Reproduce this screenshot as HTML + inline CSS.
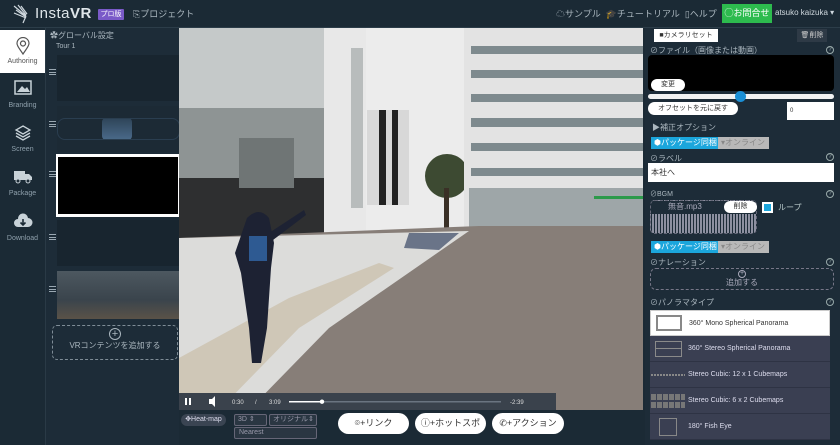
<!DOCTYPE html>
<html><head><meta charset="utf-8"><style>
*{box-sizing:border-box;margin:0;padding:0}
body{width:840px;height:445px;overflow:hidden;background:#1b2a35;font-family:"Liberation Sans","Noto Sans CJK JP",sans-serif;color:#c8d0d6;position:relative}
.a{position:absolute}
.hdr{left:0;top:0;width:840px;height:28px;background:#1b2a35;border-bottom:1px solid #2c3d49}
.nav{left:0;top:28px;width:45px;height:417px;background:#1b2a35}
.ni{position:absolute;left:0;width:45px;text-align:center;font-size:7px;color:#8fa0ac}
.tour{left:45px;top:28px;width:134px;height:417px;background:#1d2c38;border-left:1px solid #2a3a46}
.ham{position:absolute;left:3px;width:7px;height:6px;border-top:1px solid #9aa8b2;border-bottom:1px solid #9aa8b2}
.ham:after{content:"";position:absolute;left:0;top:1.5px;width:7px;border-top:1px solid #9aa8b2}
.rp{left:645px;top:28px;width:195px;height:417px;background:#1d2c38}
.lbl{position:absolute;left:650px;font-size:8px;color:#aab6be}
.q{position:absolute;right:6px;width:8px;height:8px;border:1px solid #9aa;border-radius:50%;font-size:6px;text-align:center;line-height:6px;color:#9aa}
.pill{position:absolute;background:#fff;color:#333;border-radius:9px;font-size:8px;text-align:center}
.btnb{position:absolute;font-size:8px;height:12px;line-height:12px;padding:0 3px}
.pt{position:absolute;left:650px;width:180px;height:26px;background:#3a3f52;font-size:7px;color:#dde;line-height:26px;padding-left:38px;border-bottom:1px solid #2e3344}
</style></head><body>
<div class="a hdr">
 <svg class="a" style="left:12px;top:4px" width="22" height="20" viewBox="0 0 22 20"><g stroke="#cfd8de" stroke-width="1.2" fill="none"><path d="M2 2 L14 12 M4 6 L14 13 M2 9 L14 14 M6 1 L14 11 M9 2 L15 10 M14 12 L11 19"/></g></svg>
 <div class="a" style="left:35px;top:5px;font-size:15px;color:#dfe6ea;letter-spacing:.5px">Insta<b>VR</b></div>
 <div class="a" style="left:98px;top:9px;width:26px;height:11px;background:#7a5ac8;color:#fff;font-size:7px;text-align:center;line-height:11px;border-radius:1px">プロ版</div>
 <div class="a" style="left:133px;top:7px;font-size:9px;color:#aab6be">⎘プロジェクト</div>
 <div class="a" style="left:556px;top:7px;font-size:9px;color:#aab6be">☁サンプル&nbsp; 🎓チュートリアル&nbsp; ▯ヘルプ</div>
 <div class="a" style="left:722px;top:4px;width:50px;height:19px;background:#2dbb4e;color:#fff;font-size:9px;line-height:19px;text-align:center">◯お問合せ</div>
 <div class="a" style="left:775px;top:8px;font-size:8px;color:#cfd8de">atsuko kaizuka ▾</div>
</div>
<div class="a nav">
 <div class="ni" style="top:2px;height:43px;background:#fff;color:#555"><svg width="14" height="18" viewBox="0 0 14 18" style="margin-top:7px"><path d="M7 17 C3 11 1 9 1 6.5 A6 6 0 0 1 13 6.5 C13 9 11 11 7 17Z M7 4 A2.5 2.5 0 1 0 7.01 4" fill="none" stroke="#555" stroke-width="1.2"/></svg><div style="margin-top:1px">Authoring</div></div>
 <div class="ni" style="top:52px"><svg width="18" height="15"><rect x="1" y="1" width="16" height="13" fill="none" stroke="#c8d2d8" stroke-width="1.5"/><path d="M3 12 L8 6 L11 9 L13 7 L16 12Z" fill="#c8d2d8"/></svg><div style="margin-top:5px">Branding</div></div>
 <div class="ni" style="top:96px"><svg width="18" height="18"><g fill="none" stroke="#c8d2d8" stroke-width="1.3"><path d="M9 2 L16 6 L9 10 L2 6Z M2 9 L9 13 L16 9 M2 12 L9 16 L16 12"/></g></svg><div style="margin-top:2px">Screen</div></div>
 <div class="ni" style="top:140px"><svg width="20" height="16"><rect x="1" y="3" width="11" height="9" fill="#c8d2d8"/><path d="M12 6 L16 6 L19 9 L19 12 L12 12Z" fill="#c8d2d8"/><circle cx="5" cy="13" r="2" fill="#1b2a35" stroke="#c8d2d8"/><circle cx="15" cy="13" r="2" fill="#1b2a35" stroke="#c8d2d8"/></svg><div style="margin-top:4px">Package</div></div>
 <div class="ni" style="top:185px"><svg width="20" height="16"><path d="M5 14 A4 4 0 0 1 5 6 A5 5 0 0 1 15 5 A4.5 4.5 0 0 1 15 14Z" fill="#c8d2d8"/><path d="M10 6 V12 M7.5 9.5 L10 12 L12.5 9.5" stroke="#1b2a35" stroke-width="1.6" fill="none"/></svg><div style="margin-top:4px">Download</div></div>
</div>
<div class="a tour">
 <div class="a" style="left:4px;top:2px;font-size:8px;color:#aab6be">✿グローバル設定</div>
 <div class="a" style="left:10px;top:15px;font-size:7px;color:#aab6be">Tour 1</div>
 <div class="a" style="left:11px;top:27px;width:123px;height:46px;background:#18252f"></div>
 <div class="ham" style="top:41px"></div>
 <div class="a" style="left:11px;top:78px;width:123px;height:46px;background:#1c2a35"><div class="a" style="left:45px;top:12px;width:30px;height:22px;background:linear-gradient(#2e4458,#4a6a8a);border-radius:4px"></div><div class="a" style="left:0;top:12px;width:123px;height:22px;border:1px solid #2a3e50;border-radius:8px"></div></div>
 <div class="ham" style="top:93px"></div>
 <div class="a" style="left:10px;top:126px;width:124px;height:63px;background:#fff"><div class="a" style="left:2px;top:3px;width:120px;height:57px;background:#000"></div></div>
 <div class="ham" style="top:143px"></div>
 <div class="a" style="left:11px;top:192px;width:123px;height:46px;background:#18252f"></div>
 <div class="ham" style="top:206px"></div>
 <div class="a" style="left:11px;top:243px;width:123px;height:48px;background:linear-gradient(#4d5860,#3a444c 60%,#5a5248)"></div>
 <div class="ham" style="top:258px"></div>
 <div class="a" style="left:6px;top:297px;width:126px;height:35px;border:1px dashed #7f8d97;border-radius:5px;text-align:center;font-size:8px;color:#aab6be"><div style="width:12px;height:12px;border:1px solid #aab6be;border-radius:50%;margin:2px auto 0;line-height:10px;font-size:11px">+</div>VRコンテンツを追加する</div>
</div>
<svg class="a" style="left:179px;top:28px" width="464" height="382" viewBox="0 0 464 382">
 <rect width="464" height="382" fill="#ececec"/>
 <rect x="0" y="0" width="150" height="210" fill="#c5c9c9"/>
 <rect x="0" y="80" width="145" height="75" fill="#8e9494"/>
 <rect x="0" y="150" width="145" height="62" fill="#2e2f30"/>
 <rect x="60" y="110" width="55" height="50" fill="#6f7575"/>
 <rect x="145" y="0" width="42" height="210" fill="#e8e8e8"/>
 <rect x="172" y="20" width="12" height="160" fill="#b8bcbc"/>
 <rect x="188" y="82" width="42" height="95" fill="#d8d8d8"/>
 <rect x="200" y="82" width="7" height="95" fill="#222"/><rect x="213" y="82" width="6" height="95" fill="#222"/>
 <circle cx="268" cy="148" r="22" fill="#3d4a32"/><rect x="265" y="160" width="5" height="40" fill="#3a3026"/>
 <rect x="285" y="0" width="179" height="200" fill="#e3e3e3"/>
 <g fill="#7e8a8e"><rect x="292" y="18" width="172" height="8"/><rect x="292" y="42" width="172" height="8"/><rect x="292" y="66" width="172" height="8"/><rect x="292" y="90" width="172" height="9"/><rect x="292" y="115" width="172" height="8"/><rect x="292" y="140" width="172" height="8"/></g>
 <rect x="290" y="160" width="174" height="40" fill="#9ea6a8"/>
 <rect x="415" y="168" width="49" height="3" fill="#2c9a4a"/>
 <polygon points="0,210 300,198 464,198 464,382 70,382 0,382" fill="#877e78"/>
 <polygon points="0,210 290,203 150,300 70,382 0,382" fill="#dcdcda"/>
 <polygon points="0,330 110,270 200,235 215,240 120,300 40,382 0,382" fill="#c9bea8" opacity=".7"/>
 <polygon points="230,205 280,205 260,222 225,220" fill="#6a7488"/>
 <path d="M68 190 Q80 178 90 190 L95 215 L92 240 L88 300 L82 335 L73 335 L70 300 L62 245 L56 225 Z" fill="#1d2233"/>
 <rect x="70" y="208" width="18" height="25" fill="#2e5a92"/>
 <path d="M90 205 L125 182 L127 187 L94 212Z" fill="#1d2233"/>
 <rect x="0" y="365" width="377" height="17" fill="#3a424c"/>
 <rect x="6" y="370" width="2" height="7" fill="#fff"/><rect x="10" y="370" width="2" height="7" fill="#fff"/>
 <path d="M30 371 h3 l3 -3 v11 l-3 -3 h-3z" fill="#fff"/>
 <text x="53" y="376" font-size="6" fill="#ddd" font-family="Liberation Sans">0:30</text>
 <text x="76" y="376" font-size="6" fill="#ddd" font-family="Liberation Sans">/</text>
 <text x="90" y="376" font-size="6" fill="#ddd" font-family="Liberation Sans">3:09</text>
 <rect x="110" y="373" width="212" height="1.5" fill="#6a7480"/><rect x="110" y="373" width="33" height="1.5" fill="#fff"/><circle cx="143" cy="373.7" r="2.2" fill="#fff"/>
 <text x="331" y="376" font-size="6" fill="#ddd" font-family="Liberation Sans">-2:39</text>
</svg>
<div class="a" style="left:181px;top:414px;width:45px;height:12px;background:#3a4452;border-radius:6px;font-size:7px;color:#dde;text-align:center;line-height:12px">✥Heat-map</div>
<div class="a" style="left:234px;top:414px;width:33px;height:12px;border:1px solid #667;background:#2a3642;border-radius:2px;font-size:7px;color:#99a;line-height:10px;padding-left:3px">3D ⇕</div>
<div class="a" style="left:269px;top:414px;width:48px;height:12px;border:1px solid #667;background:#2a3642;border-radius:2px;font-size:7px;color:#99a;line-height:10px;padding-left:3px">オリジナル⇕</div>
<div class="a" style="left:234px;top:427px;width:83px;height:12px;border:1px solid #667;background:#2a3642;border-radius:2px;font-size:7px;color:#99a;line-height:10px;padding-left:4px">Nearest</div>
<div class="pill" style="left:338px;top:413px;width:71px;height:21px;line-height:21px;font-size:9px;border-radius:11px">⌾+リンク</div>
<div class="pill" style="left:415px;top:413px;width:71px;height:21px;line-height:21px;font-size:9px;border-radius:11px;overflow:hidden;white-space:nowrap">ⓘ+ホットスポ</div>
<div class="pill" style="left:492px;top:413px;width:72px;height:21px;line-height:21px;font-size:9px;border-radius:11px">✆+アクション</div>
<div class="a rp"></div>
<div class="a" style="left:654px;top:29px;width:64px;height:13px;background:#fff;color:#333;font-size:7px;line-height:13px;text-align:center">■カメラリセット</div>
<div class="a" style="left:797px;top:29px;width:30px;height:13px;background:#2e3a46;color:#ccc;font-size:7px;line-height:13px;text-align:center">🗑削除</div>
<div class="lbl" style="top:45px">⊘ファイル（画像または動画）</div><div class="q" style="top:46px">?</div>
<div class="a" style="left:648px;top:55px;width:186px;height:36px;background:#000;border-radius:4px"></div>
<div class="pill" style="left:651px;top:79px;width:34px;height:12px;line-height:12px;font-size:7px">変更</div>
<div class="a" style="left:648px;top:94px;width:186px;height:5px;background:#f2f2f2;border-radius:3px"></div>
<div class="a" style="left:735px;top:91px;width:11px;height:11px;background:#1a8fd6;border-radius:50%"></div>
<div class="pill" style="left:648px;top:102px;width:90px;height:13px;line-height:13px;font-size:7px">オフセットを元に戻す</div>
<div class="a" style="left:787px;top:102px;width:47px;height:18px;background:#fff;color:#333;font-size:6px;line-height:18px;padding-left:3px">0</div>
<div class="lbl" style="top:122px;left:652px">▶補正オプション</div>
<div class="btnb" style="left:651px;top:137px;background:#1ba6dc;color:#fff">⬢パッケージ同梱</div>
<div class="btnb" style="left:718px;top:137px;background:#b8b8b8;color:#888;width:51px">▾オンライン</div>
<div class="lbl" style="top:153px">⊘ラベル</div><div class="q" style="top:153px">?</div>
<div class="a" style="left:648px;top:163px;width:186px;height:19px;background:#fff;color:#333;font-size:8px;line-height:19px;padding-left:3px">本社へ</div>
<div class="lbl" style="top:189px;font-size:7px">⊘BGM</div><div class="q" style="top:190px">?</div>
<div class="a" style="left:650px;top:200px;width:107px;height:34px;border:1px dashed #778;border-radius:5px;background:repeating-linear-gradient(90deg,#1d2c38 0 1px,transparent 1px 3px),linear-gradient(transparent 40%,#aab 40%);opacity:.8"></div>
<div class="a" style="left:668px;top:201px;font-size:8px;color:#aab">無音.mp3</div>
<div class="pill" style="left:724px;top:201px;width:33px;height:12px;line-height:12px;font-size:7px">削除</div>
<div class="a" style="left:762px;top:202px;width:11px;height:11px;background:#fff;border:2px solid #fff"><div style="width:7px;height:7px;background:#1ba6dc"></div></div>
<div class="a" style="left:778px;top:202px;font-size:8px;color:#bcc">ループ</div>
<div class="btnb" style="left:651px;top:241px;background:#1ba6dc;color:#fff">⬢パッケージ同梱</div>
<div class="btnb" style="left:718px;top:241px;background:#b8b8b8;color:#888;width:51px">▾オンライン</div>
<div class="lbl" style="top:257px">⊘ナレーション</div><div class="q" style="top:258px">?</div>
<div class="a" style="left:650px;top:268px;width:184px;height:22px;border:1px dashed #778;border-radius:6px;text-align:center;font-size:8px;color:#aab;line-height:10px"><div style="width:8px;height:8px;border:1px solid #aab;border-radius:50%;margin:1px auto 0;font-size:7px;line-height:6px">+</div>追加する</div>
<div class="lbl" style="top:297px">⊘パノラマタイプ</div><div class="q" style="top:298px">?</div>
<div class="pt" style="top:310px;background:#fff;color:#333;border:1px solid #ccc">360° Mono Spherical Panorama</div>
<div class="a" style="left:656px;top:315px;width:26px;height:16px;border:2px solid #888;background:#fff"></div>
<div class="pt" style="top:336px">360° Stereo Spherical Panorama</div>
<div class="a" style="left:655px;top:341px;width:27px;height:16px;border:1.5px solid #8a8a8a;border-top-width:1.5px"><div style="border-top:1.5px solid #8a8a8a;margin-top:6px"></div></div>
<div class="pt" style="top:362px;padding-left:38px">Stereo Cubic: 12 x 1 Cubemaps</div>
<div class="a" style="left:651px;top:374px;width:34px;height:2px;background:repeating-linear-gradient(90deg,#888 0 2px,transparent 2px 3px)"></div>
<div class="pt" style="top:388px">Stereo Cubic: 6 x 2 Cubemaps</div>
<div class="a" style="left:651px;top:394px;width:34px;height:14px;background:repeating-linear-gradient(90deg,#777 0 5px,transparent 5px 6px);-webkit-mask:repeating-linear-gradient(#000 0 6px,transparent 6px 8px)"></div>
<div class="pt" style="top:414px">180° Fish Eye</div>
<div class="a" style="left:659px;top:418px;width:18px;height:18px;border:1.5px solid #888"></div>
</body></html>
